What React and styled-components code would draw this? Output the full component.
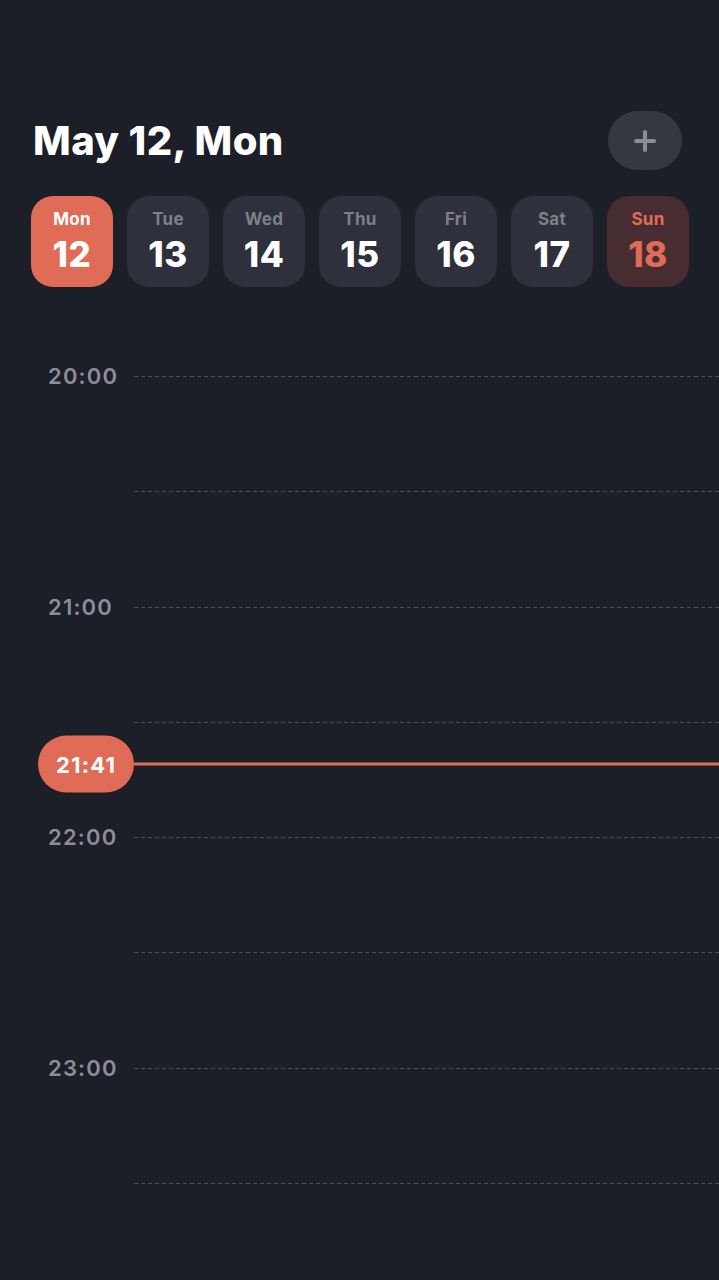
import React from 'react';
import styled, { createGlobalStyle } from 'styled-components';

const GlobalStyle = createGlobalStyle`
  html, body {
    margin: 0;
    padding: 0;
    background: #1c1e28;
  }
  body {
    font-family: Inter, "Noto Sans", sans-serif;
    color: #ffffff;
  }
`;

const Screen = styled.div`
  width: 719px;
  height: 1280px;
  overflow: hidden;
  background: #1c1e28;
  display: flex;
  flex-direction: column;
`;

const Header = styled.div`
  display: flex;
  align-items: center;
  justify-content: space-between;
  padding: 111px 37px 0 33px;
  height: 59px;
`;

const Title = styled.h1`
  margin: 0;
  font-size: 40px;
  font-weight: 800;
  letter-spacing: 0.4px;
  color: #ffffff;
`;

const AddButton = styled.button`
  width: 74px;
  height: 59px;
  border: none;
  border-radius: 30px;
  background: #353741;
  display: flex;
  align-items: center;
  justify-content: center;
  padding: 0;
  cursor: pointer;
`;

const DayStrip = styled.div`
  display: flex;
  gap: 14px;
  padding: 26px 0 0 31px;
`;

const DayChip = styled.div`
  width: 82px;
  height: 91px;
  border-radius: 22px;
  background: ${p => (p.active ? '#e06c57' : p.weekend ? '#472d31' : '#2e303b')};
  display: flex;
  flex-direction: column;
  align-items: center;
  justify-content: center;
  gap: 4px;
  padding-bottom: 2px;
  box-sizing: border-box;
`;

const DayName = styled.span`
  font-size: 17px;
  font-weight: 700;
  line-height: 22px;
  letter-spacing: 0.3px;
  color: ${p => (p.active ? '#ffffff' : p.weekend ? '#e06c57' : '#7e808a')};
`;

const DayNum = styled.span`
  font-size: 35px;
  font-weight: 800;
  line-height: 40px;
  letter-spacing: 0.5px;
  color: ${p => (p.weekend && !p.active ? '#e06c57' : '#ffffff')};
`;

const Timeline = styled.div`
  position: relative;
  margin-top: 89px;
`;

const Slot = styled.div`
  display: flex;
  height: 115.3px;
`;

const TimeLabel = styled.span`
  width: 134px;
  box-sizing: border-box;
  padding-left: 48px;
  margin-top: -13px;
  height: 26px;
  line-height: 26px;
  font-size: 22px;
  font-weight: 600;
  letter-spacing: 1.2px;
  color: #8d8e97;
`;

const Dashes = styled.div`
  flex: 1;
  height: 1px;
  background-image: repeating-linear-gradient(
    to right,
    #4c4e58 0 4px,
    transparent 4px 7px
  );
  margin-left: ${p => (p.half ? '134px' : '0')};
`;

const NowMarker = styled.div`
  position: absolute;
  left: 38px;
  right: 0;
  display: flex;
  align-items: center;
  transform: translateY(-50%);
`;

const NowPill = styled.div`
  width: 96px;
  height: 57px;
  border-radius: 29px;
  background: #e06c57;
  display: flex;
  align-items: center;
  justify-content: center;
  font-size: 22px;
  font-weight: 700;
  letter-spacing: 1.2px;
  color: #ffffff;
`;

const NowLine = styled.div`
  flex: 1;
  height: 3px;
  background: #e06c57;
`;

const days = [
  { name: 'Mon', num: 12, active: true },
  { name: 'Tue', num: 13 },
  { name: 'Wed', num: 14 },
  { name: 'Thu', num: 15 },
  { name: 'Fri', num: 16 },
  { name: 'Sat', num: 17 },
  { name: 'Sun', num: 18, weekend: true },
];

const hours = ['20:00', '21:00', '22:00', '23:00'];
const SLOT = 115.3;

export default function App() {
  const startHour = 20;
  const now = { h: 21, m: 41 };
  const nowTop = ((now.h - startHour) * 60 + now.m) / 30 * SLOT;

  return (
    <Screen>
      <GlobalStyle />
      <Header>
        <Title>May 12, Mon</Title>
        <AddButton aria-label="Add">
          <svg width="22" height="22" viewBox="0 0 22 22">
            <path d="M11 2v18M2 11h18" stroke="#8b8d96" strokeWidth="4" strokeLinecap="round" />
          </svg>
        </AddButton>
      </Header>
      <DayStrip>
        {days.map(d => (
          <DayChip key={d.num} active={d.active} weekend={d.weekend}>
            <DayName active={d.active} weekend={d.weekend}>{d.name}</DayName>
            <DayNum active={d.active} weekend={d.weekend}>{d.num}</DayNum>
          </DayChip>
        ))}
      </DayStrip>
      <Timeline>
        {hours.map(h => (
          <React.Fragment key={h}>
            <Slot>
              <TimeLabel>{h}</TimeLabel>
              <Dashes />
            </Slot>
            <Slot>
              <Dashes half />
            </Slot>
          </React.Fragment>
        ))}
        <NowMarker style={{ top: nowTop }}>
          <NowPill>21:41</NowPill>
          <NowLine />
        </NowMarker>
      </Timeline>
    </Screen>
  );
}
